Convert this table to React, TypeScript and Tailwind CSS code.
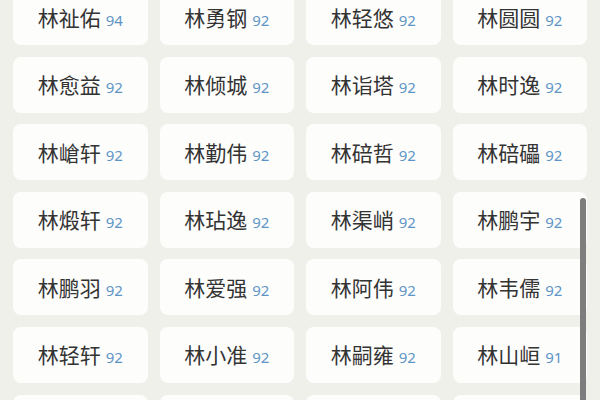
import React from "react";

interface NameItem {
  name: string;
  score: number;
}

const names: NameItem[] = [
  { name: "林祉佑", score: 94 },
  { name: "林勇钢", score: 92 },
  { name: "林轻悠", score: 92 },
  { name: "林圆圆", score: 92 },
  { name: "林愈益", score: 92 },
  { name: "林倾城", score: 92 },
  { name: "林诣塔", score: 92 },
  { name: "林时逸", score: 92 },
  { name: "林嵢轩", score: 92 },
  { name: "林勤伟", score: 92 },
  { name: "林碚哲", score: 92 },
  { name: "林碚礧", score: 92 },
  { name: "林煅轩", score: 92 },
  { name: "林玷逸", score: 92 },
  { name: "林渠峭", score: 92 },
  { name: "林鹏宇", score: 92 },
  { name: "林鹏羽", score: 92 },
  { name: "林爱强", score: 92 },
  { name: "林阿伟", score: 92 },
  { name: "林韦儒", score: 92 },
  { name: "林轻轩", score: 92 },
  { name: "林小准", score: 92 },
  { name: "林嗣雍", score: 92 },
  { name: "林山峘", score: 91 },
];

const NameCard: React.FC<{ item?: NameItem }> = ({ item }) => (
  <div className="h-14 rounded-lg bg-[#fdfdfc] flex items-center justify-center">
    {item && (
      <div className="flex items-baseline gap-[5px]">
        <span className="text-[21px] leading-none text-[#333333] font-['Noto_Sans_CJK_SC',sans-serif]">
          {item.name}
        </span>
        <span className="text-[15px] leading-none text-[#5f95c6] font-['Noto_Sans',sans-serif]">
          {item.score}
        </span>
      </div>
    )}
  </div>
);

export default function App() {
  return (
    <div className="relative w-[600px] h-[400px] overflow-hidden bg-[#f0f0eb]">
      <div className="grid grid-cols-4 gap-x-3 gap-y-[11.6px] px-[13px] -mt-[11px]">
        {names.map((item) => (
          <NameCard key={item.name} item={item} />
        ))}
        {/* next row, only its top edge is in view */}
        <NameCard />
        <NameCard />
        <NameCard />
        <NameCard />
      </div>
      {/* scrollbar */}
      <div className="absolute left-[580px] top-[198px] w-[6px] h-[220px] rounded-full bg-[#7d7d7d]" />
    </div>
  );
}
